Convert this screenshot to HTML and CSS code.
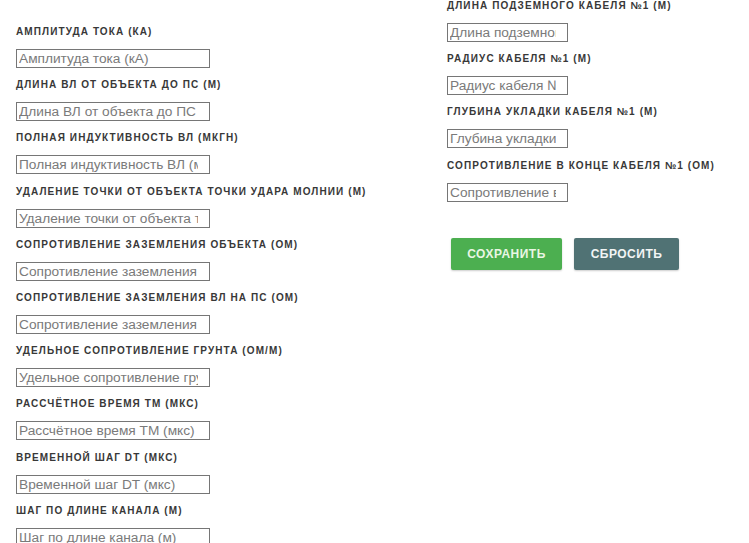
FILE: index.html
```html
<!DOCTYPE html>
<html lang="ru">
<head>
<meta charset="utf-8">
<title>Параметры расчёта</title>
<link rel="stylesheet" href="styles.css">
</head>
<body>
<form class="calc-form">
  <div class="col col-main">
    <div class="field"><label>Амплитуда тока (кА)</label><input type="text" placeholder="Амплитуда тока (кА)"></div>
    <div class="field"><label>Длина ВЛ от объекта до ПС (м)</label><input type="text" placeholder="Длина ВЛ от объекта до ПС (м)"></div>
    <div class="field"><label>Полная индуктивность ВЛ (мкГн)</label><input type="text" placeholder="Полная индуктивность ВЛ (мкГн)"></div>
    <div class="field"><label>Удаление точки от объекта точки удара молнии (м)</label><input type="text" placeholder="Удаление точки от объекта точки удара молнии (м)"></div>
    <div class="field"><label>Сопротивление заземления объекта (Ом)</label><input type="text" placeholder="Сопротивление заземления объекта (Ом)"></div>
    <div class="field"><label>Сопротивление заземления ВЛ на ПС (Ом)</label><input type="text" placeholder="Сопротивление заземления ВЛ на ПС (Ом)"></div>
    <div class="field"><label>Удельное сопротивление грунта (Ом/м)</label><input type="text" placeholder="Удельное сопротивление грунта (Ом/м)"></div>
    <div class="field"><label>Рассчётное время Tm (мкс)</label><input type="text" placeholder="Рассчётное время TM (мкс)"></div>
    <div class="field"><label>Временной шаг dt (мкс)</label><input type="text" placeholder="Временной шаг DT (мкс)"></div>
    <div class="field"><label>Шаг по длине канала (м)</label><input type="text" placeholder="Шаг по длине канала (м)"></div>
  </div>
  <div class="col col-cable">
    <div class="field"><label>Длина подземного кабеля №1 (м)</label><input type="text" class="short" placeholder="Длина подземного кабеля №1 (м)"></div>
    <div class="field"><label>Радиус кабеля №1 (м)</label><input type="text" class="short" placeholder="Радиус кабеля №1 (м)"></div>
    <div class="field"><label>Глубина укладки кабеля №1 (м)</label><input type="text" class="short" placeholder="Глубина укладки кабеля №1 (м)"></div>
    <div class="field"><label>Сопротивление в конце кабеля №1 (Ом)</label><input type="text" class="short" placeholder="Сопротивление в конце кабеля №1 (Ом)"></div>
    <div class="actions">
      <button type="submit" class="btn btn-save">Сохранить</button>
      <button type="reset" class="btn btn-reset">Сбросить</button>
    </div>
  </div>
</form>
</body>
</html>
```
FILE: styles.css
```css
html, body {
  margin: 0;
  padding: 0;
  background: #ffffff;
}

body {
  font-family: "Liberation Sans", Arial, sans-serif;
  color: #333333;
  overflow: hidden;
}

.calc-form {
  display: flex;
  align-items: flex-start;
}

.col-main {
  padding: 26px 0 0 16px;
  width: 447px;
  box-sizing: border-box;
  flex: none;
}

.col-cable {
  padding-top: 0;
  flex: none;
}

.field {
  display: flex;
  flex-direction: column;
  align-items: flex-start;
  margin-bottom: 11.2px;
}

.field label {
  display: block;
  font-size: 10px;
  line-height: 12px;
  font-weight: bold;
  text-transform: uppercase;
  letter-spacing: 1.1px;
  color: #383838;
  margin-bottom: 11px;
  white-space: nowrap;
}

.field input {
  box-sizing: border-box;
  width: 194px;
  height: 19px;
  margin: 0;
  padding: 0 11px 0 2px;
  border: 1px solid #767676;
  border-radius: 0;
  font-family: "Liberation Sans", Arial, sans-serif;
  font-size: 13.7px;
  line-height: 17px;
  color: #333333;
  background: #ffffff;
  outline: none;
}

.field input.short {
  width: 121px;
}

.field input::placeholder {
  color: #7a7a7a;
  opacity: 1;
}

.actions {
  display: flex;
  gap: 12px;
  margin: 36px 0 0 4px;
}

.btn {
  height: 32px;
  padding: 0;
  border: none;
  border-radius: 2px;
  font-family: "Liberation Sans", Arial, sans-serif;
  font-size: 12px;
  font-weight: bold;
  letter-spacing: 0.5px;
  text-transform: uppercase;
  cursor: pointer;
  box-shadow: 0 1px 2px rgba(0, 0, 0, 0.2);
}

.btn-save {
  width: 111px;
  background: #4caf50;
  color: #e9f6e4;
}

.btn-reset {
  width: 105px;
  background: #507274;
  color: #f2f5f5;
}
```
